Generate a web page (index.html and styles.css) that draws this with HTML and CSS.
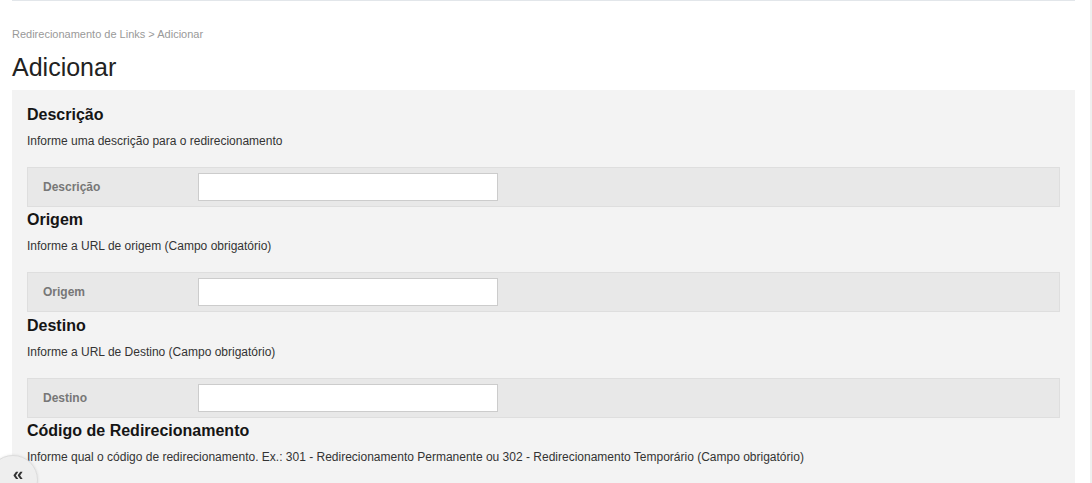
FILE: index.html
```html
<!DOCTYPE html>
<html lang="pt-BR">
<head>
    <meta charset="UTF-8">
    <meta name="viewport" content="width=device-width, initial-scale=1.0">
    <title>Adicionar - Redirecionamento de Links</title>
    <link rel="stylesheet" href="styles.css">
</head>
<body>
    <div class="layout">
        <div class="main">
            <div class="topbar"></div>
            <div class="breadcrumb">Redirecionamento de Links &gt; Adicionar</div>
            <h1 class="page-title">Adicionar</h1>

            <form class="panel">
                <div class="section">
                    <h2>Descrição</h2>
                    <p class="hint">Informe uma descrição para o redirecionamento</p>
                    <div class="field-row">
                        <label for="descricao">Descrição</label>
                        <input type="text" id="descricao">
                    </div>
                </div>

                <div class="section">
                    <h2>Origem</h2>
                    <p class="hint">Informe a URL de origem (Campo obrigatório)</p>
                    <div class="field-row">
                        <label for="origem">Origem</label>
                        <input type="text" id="origem">
                    </div>
                </div>

                <div class="section">
                    <h2>Destino</h2>
                    <p class="hint">Informe a URL de Destino (Campo obrigatório)</p>
                    <div class="field-row">
                        <label for="destino">Destino</label>
                        <input type="text" id="destino">
                    </div>
                </div>

                <div class="section">
                    <h2>Código de Redirecionamento</h2>
                    <p class="hint">Informe qual o código de redirecionamento. Ex.: 301 - Redirecionamento Permanente ou 302 - Redirecionamento Temporário (Campo obrigatório)</p>
                </div>
            </form>
        </div>
        <div class="edge"></div>
    </div>

    <button class="collapse-btn" type="button">&laquo;</button>
</body>
</html>
```

FILE: styles.css
```css
body {
    font-family: "Liberation Sans", Arial, sans-serif;
    background-color: #fff;
    color: #222;
    margin: 0;
    padding: 0;
    overflow: hidden;
}

.layout {
    display: flex;
    min-height: 100vh;
}

.main {
    width: 1063px;
    margin-left: 12px;
}

.edge {
    flex: 1;
    border-right: 2px solid #efefef;
}

.topbar {
    height: 1px;
    background: #e2e6ea;
}

.breadcrumb {
    margin-top: 27px;
    font-size: 11px;
    line-height: 13px;
    color: #999;
}

.page-title {
    margin: 11px 0 8px;
    font-size: 25px;
    line-height: 30px;
    font-weight: normal;
    color: #222;
}

.panel {
    background: #f3f3f3;
    padding: 16px 15px 60px;
}

.section {
    margin-bottom: 4.3px;
}

.section h2 {
    margin: 0 0 10px;
    font-size: 16px;
    font-weight: bold;
    color: #151515;
}

.hint {
    margin: 0 0 19px;
    font-size: 12px;
    color: #333;
}

.field-row {
    display: flex;
    align-items: center;
    background: #e8e8e8;
    border: 1px solid #dedede;
    padding: 5px 15px;
}

.field-row label {
    width: 155px;
    font-size: 12px;
    font-weight: bold;
    color: #777;
}

.field-row input {
    box-sizing: border-box;
    width: 300px;
    height: 28px;
    margin: 0;
    border: 1px solid #ccc;
    background: #fff;
    font-family: inherit;
    font-size: 12px;
}

.collapse-btn {
    position: fixed;
    left: -12px;
    bottom: -22px;
    width: 50px;
    height: 50px;
    border-radius: 50%;
    border: 1px solid #dcdcdc;
    background: #eee;
    box-shadow: 0 0 3px rgba(0, 0, 0, 0.1);
    padding: 12px 0 0 10px;
    display: flex;
    align-items: flex-start;
    justify-content: center;
    font-family: "Liberation Sans", Arial, sans-serif;
    font-size: 19px;
    font-weight: bold;
    line-height: 12px;
    color: #333;
    cursor: pointer;
}
```
